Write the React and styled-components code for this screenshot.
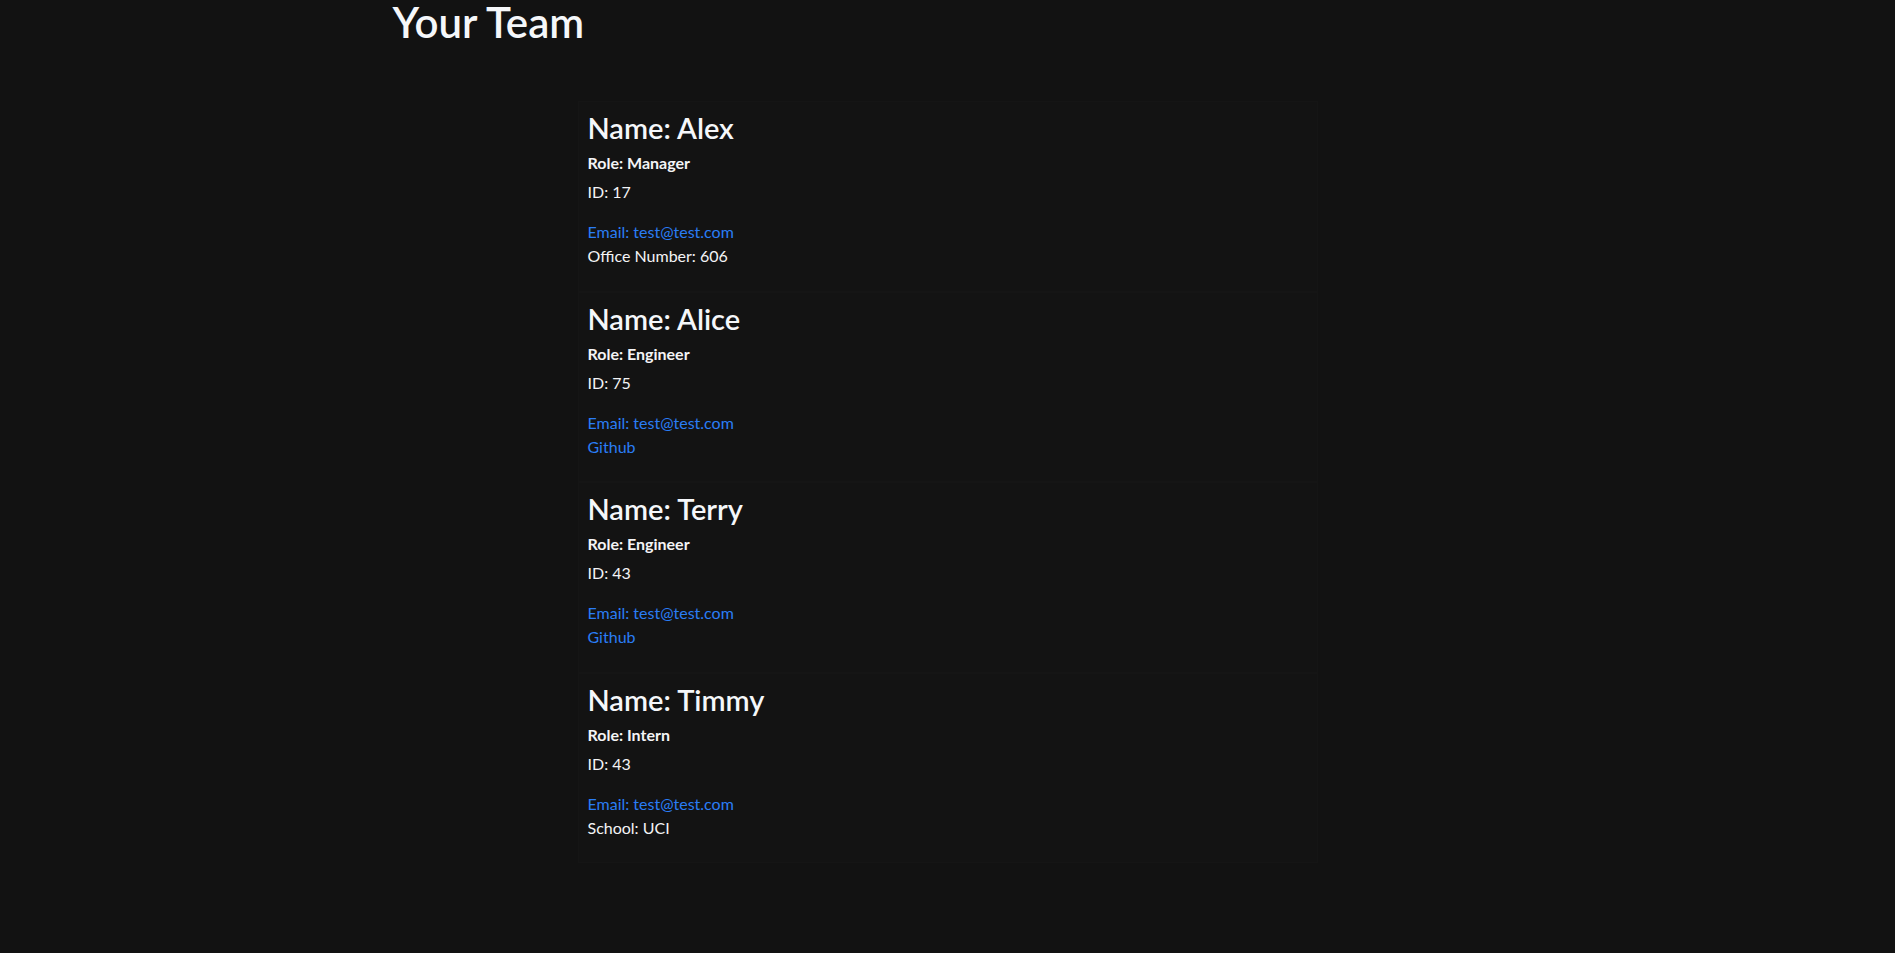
import React from "react";
import styled, { createGlobalStyle } from "styled-components";

const GlobalStyle = createGlobalStyle`
  html, body {
    margin: 0;
    padding: 0;
    background: #121212;
  }
  body {
    font-family: Lato, "Open Sans", "Liberation Sans", sans-serif;
    color: #f3f4f6;
    font-size: 16px;
    line-height: 1.5;
  }
  * { box-sizing: border-box; }
`;

const Page = styled.div`
  min-height: 953px;
  background: #121212;
  padding-bottom: 40px;
`;

const Header = styled.header`
  max-width: 1140px;
  margin: 0 auto;
  padding: 0 15px;
`;

const Title = styled.h1`
  margin: 0;
  font-size: 42px;
  font-weight: 600;
  line-height: 48px;
  color: #f5f7fa;
  position: relative;
  top: -2px;
`;

const CardList = styled.main`
  width: 740px;
  margin: 53px auto 0;
  display: flex;
  flex-direction: column;
`;

const Card = styled.section`
  border: 1px solid #151515;
  background: #131313;
  padding: 8px 9px 22px;
  height: 190.5px;
  display: flex;
  flex-direction: column;
`;

const Name = styled.h3`
  margin: 0;
  font-size: 29px;
  font-weight: 600;
  line-height: 36px;
  color: #f5f7fa;
`;

const Role = styled.h6`
  margin: 5px 0 0;
  font-size: 16px;
  font-weight: 700;
  line-height: 24px;
  color: #f3f4f6;
`;

const Detail = styled.p`
  margin: ${(p) => (p.$gap ? "5px 0 16px" : "0")};
  font-size: 16px;
  line-height: 24px;
  color: #f3f4f6;
`;

const Link = styled.a`
  display: block;
  font-size: 16px;
  line-height: 24px;
  color: #2a7df5;
  text-decoration: none;
`;

const team = [
  { name: "Alex", role: "Manager", id: 17, extra: { type: "text", label: "Office Number: 606" } },
  { name: "Alice", role: "Engineer", id: 75, extra: { type: "link", label: "Github" } },
  { name: "Terry", role: "Engineer", id: 43, extra: { type: "link", label: "Github" } },
  { name: "Timmy", role: "Intern", id: 43, extra: { type: "text", label: "School: UCI" } },
];

export default function App() {
  return (
    <Page>
      <GlobalStyle />
      <Header>
        <Title>Your Team</Title>
      </Header>
      <CardList>
        {team.map((m) => (
          <Card key={m.name}>
            <Name>Name: {m.name}</Name>
            <Role>Role: {m.role}</Role>
            <Detail $gap>ID: {m.id}</Detail>
            <Link href="#">Email: test@test.com</Link>
            {m.extra.type === "link" ? (
              <Link href="#">{m.extra.label}</Link>
            ) : (
              <Detail>{m.extra.label}</Detail>
            )}
          </Card>
        ))}
      </CardList>
    </Page>
  );
}
